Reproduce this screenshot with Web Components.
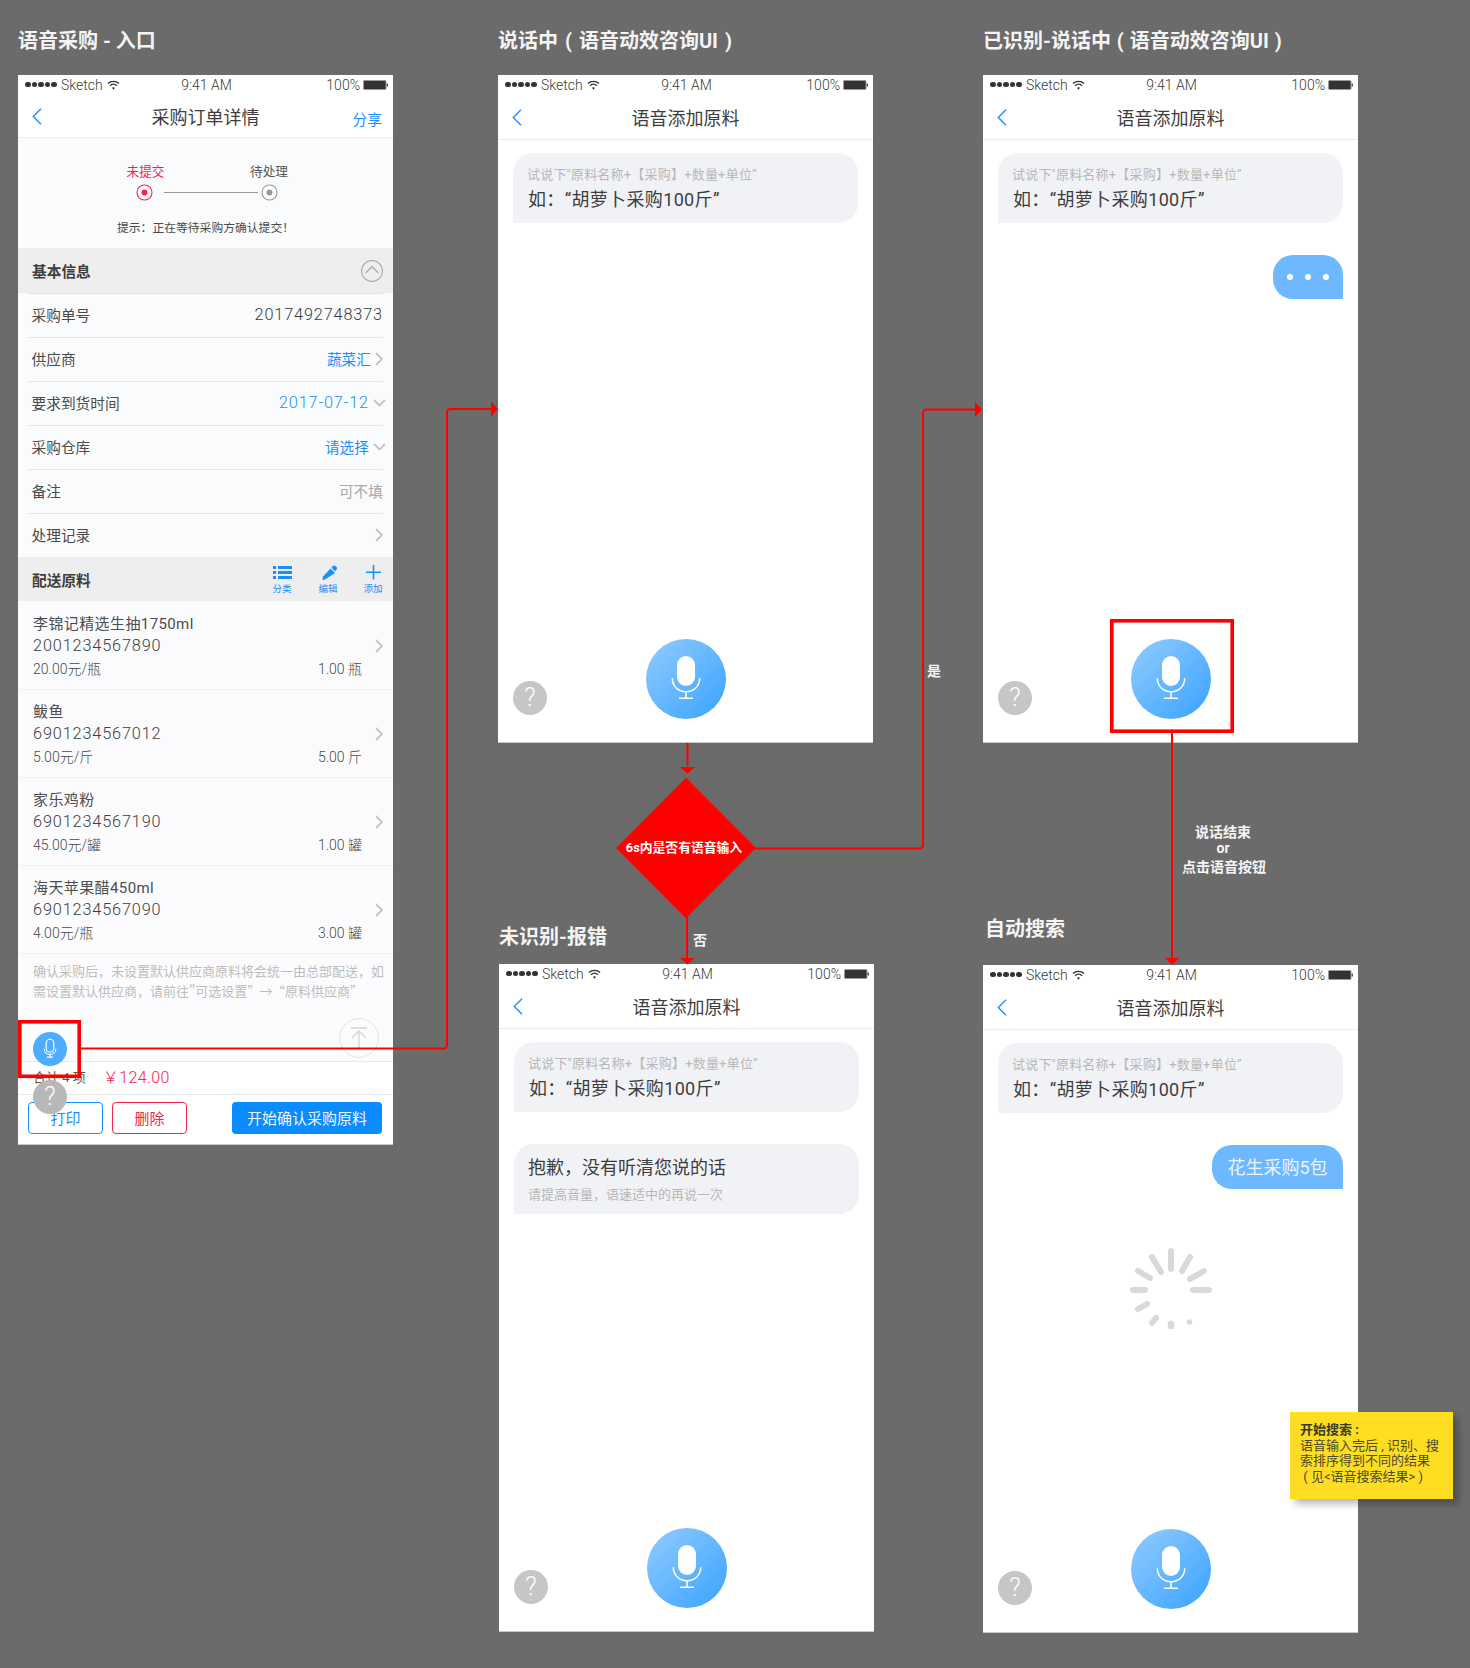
<!DOCTYPE html>
<html lang="zh-CN"><head><meta charset="utf-8"><title>语音采购</title>
<style>
html,body{margin:0;padding:0;background:#6b6b6b}
body{font-family:Roboto,"Noto Sans CJK SC",sans-serif;color:#444}
</style></head><body>
<flow-canvas>
  <canvas-title x="18" y="27" ws="0">语音采购 - 入口</canvas-title>
  <canvas-title x="498" y="27" ws="2">说话中 ( 语音动效咨询UI )</canvas-title>
  <canvas-title x="983" y="27" ws="1">已识别-说话中 ( 语音动效咨询UI )</canvas-title>
  <canvas-title x="499" y="923">未识别-报错</canvas-title>
  <canvas-title x="985" y="915">自动搜索</canvas-title>

  <phone-frame x="18" y="75" h="1069"><order-screen></order-screen></phone-frame>

  <phone-frame x="498" y="75" h="667"><voice-screen>
    <prompt-bubble></prompt-bubble>
  </voice-screen></phone-frame>

  <phone-frame x="983" y="75" h="667"><voice-screen>
    <prompt-bubble></prompt-bubble>
    <user-bubble dots></user-bubble>
  </voice-screen></phone-frame>

  <phone-frame x="499" y="964" h="667"><voice-screen>
    <prompt-bubble></prompt-bubble>
    <error-bubble></error-bubble>
  </voice-screen></phone-frame>

  <phone-frame x="983" y="965" h="667"><voice-screen>
    <prompt-bubble></prompt-bubble>
    <user-bubble>花生采购5包</user-bubble>
    <load-spinner></load-spinner>
  </voice-screen></phone-frame>

  <flow-lines></flow-lines>
  <sticky-note x="1290" y="1412"></sticky-note>
</flow-canvas>

<script>
const BLUE='#1a90ff',RED='#f5224f';
const chevL='<svg width="10" height="17" viewBox="0 0 10 17" fill="none" stroke="#1a90ff" stroke-width="1.4"><path d="M9 .8 1.3 8.5 9 16.2"/></svg>';
const chevR='<svg width="8" height="14" viewBox="0 0 8 14" fill="none" stroke="#c4c4c4" stroke-width="1.8"><path d="M1 1l6 6-6 6"/></svg>';
const chevD='<svg width="13" height="8" viewBox="0 0 13 8" fill="none" stroke="#c4c4c4" stroke-width="1.8"><path d="M1 1l5.5 5.5L12 1"/></svg>';
function micSvg(size,sw){return `<svg width="${size}" height="${size}" viewBox="0 0 80 80" fill="none" stroke="#fff" stroke-width="${sw}"><rect x="31" y="17" width="18" height="30" rx="9" fill="${size>50?'#fff':'none'}" stroke="${size>50?'none':'#fff'}"/><path d="M26.3 39.3c0 8 6 13.4 13.7 13.4s13.7-5.4 13.7-13.4M40 52.7V59M33 59.2h14"/></svg>`}

class Base extends HTMLElement{
  constructor(){super();this.attachShadow({mode:'open'});}
  connectedCallback(){this.shadowRoot.innerHTML=this.render();}
}
function def(n,fn){customElements.define(n,class extends Base{render(){return fn(this)}})}

def('flow-canvas',()=>`<style>:host{display:block;position:relative;width:1470px;height:1668px;overflow:hidden}</style><slot></slot>`);

def('canvas-title',e=>`<style>:host{position:absolute;left:${e.getAttribute('x')}px;top:${e.getAttribute('y')}px;font-size:20px;font-weight:700;line-height:28px;color:#f4f4f4;white-space:nowrap;word-spacing:${e.getAttribute('ws')||0}px}</style><slot></slot>`);

def('phone-frame',e=>`<style>:host{position:absolute;left:${e.getAttribute('x')}px;top:${e.getAttribute('y')}px;width:375px;height:${e.getAttribute('h')}px;background:#fff;display:flex;flex-direction:column;box-shadow:0 1px 0 #c8c8c8}
::slotted(*){flex:1;min-height:0}</style><status-bar></status-bar><slot></slot>`);

def('status-bar',()=>`<style>:host{display:grid;grid-template-columns:1fr auto 1fr;align-items:center;height:20px;flex:none;box-sizing:border-box;padding:0 5px 1px 7px;font-size:14px;font-weight:300;color:#3a3a3a;background:#fff}
.l,.r{display:flex;align-items:center}.r{justify-content:flex-end}
.d{display:flex;gap:1px;margin-right:4px}.d i{width:5.6px;height:5.6px;border-radius:50%;background:#333}
svg{display:block}.s{margin-right:4px}.b{margin-left:3px}</style>
<div class="l"><span class="d"><i></i><i></i><i></i><i></i><i></i></span><span class="s">Sketch</span>
<svg width="13" height="10" viewBox="0 0 13 10" fill="none" stroke="#333" stroke-width="1.4"><path d="M1 3.6c3-3 8-3 11 0M3 5.7c2-1.9 5-1.9 7 0"/><path d="M6.5 9.8 4.9 7.8c1-.8 2.2-.8 3.2 0z" fill="#333" stroke="none"/></svg></div>
<span>9:41 AM</span>
<div class="r"><span>100%</span><svg class="b" width="25" height="10" viewBox="0 0 25 10"><rect x=".5" y=".5" width="22.500" height="9" rx="1" fill="#333" stroke="#999"/><rect x="23.500" y="3.500" width="1.500" height="3" fill="#555"/></svg></div>`);

def('nav-bar',e=>`<style>:host{display:grid;grid-template-columns:1fr auto 1fr;align-items:center;flex:none;height:${e.getAttribute('h')||45}px;box-sizing:border-box;border-bottom:1px solid #ececf1;padding:${e.getAttribute('h')?3:4}px 11px 0 14px;background:#fff}
h1{margin:0 0 0 -3px;font-size:18px;font-weight:400;color:#3d3d3d;line-height:24px}
.b{display:flex}.b svg{display:block;margin-top:-3px}.a{text-align:right;color:${BLUE};font-size:14.7px;margin-top:1px}</style>
<div class="b">${chevL}</div><h1><slot></slot></h1><div class="a">${e.getAttribute('action')||''}</div>`);

def('help-button',e=>{const s=e.getAttribute('color')||'#c6c6c6';return `<style>:host{display:flex;align-items:center;justify-content:center;width:34px;height:34px;border-radius:50%;background:${s};color:#fff;font-size:25px;font-weight:300;line-height:34px}</style>?`});

def('mic-button',e=>{const z=+e.getAttribute('size')||80;return `<style>:host{display:flex;width:${z}px;height:${z}px;border-radius:50%;background:${z>50?'linear-gradient(135deg,#93cbff,#38a3ff)':'#4dadff'}}svg{display:block}</style>${micSvg(z,z>50?1.5:2.8)}`});

/* order page parts */
def('section-head',e=>`<style>:host{display:flex;align-items:center;justify-content:space-between;height:${e.getAttribute('h')||44}px;box-sizing:border-box;padding:0 10px 0 14px;background:#eeeeee;flex:none;font-size:14.7px;font-weight:700;color:#3d3d3d}</style><span>${e.getAttribute('label')}</span><slot></slot>`);

def('info-row',e=>{const t=e.getAttribute('tone');const c=t==='blue'?BLUE:t==='gray'?'#a8a8a8':'#3a3a3a';const ic=e.getAttribute('icon');const num=e.hasAttribute('num');
return `<style>:host{display:flex;align-items:center;height:44px;box-sizing:border-box;margin:0 10px;padding:0 0 2px 3.5px;border-bottom:1px solid #e8e8ea;flex:none;font-size:14.7px;color:#4a4a4a}
.l{flex:1}.v{color:${c};${num?'font-size:16.3px;font-weight:300;letter-spacing:.85px;':''}}.i{display:flex;margin-left:4px;${ic==='d'?'margin-right:-3px;':''}}svg{display:block}</style>
<span class="l">${e.getAttribute('label')}</span><span class="v">${e.getAttribute('value')||''}</span>${ic?`<span class="i">${ic==='d'?chevD:chevR}</span>`:''}`});

def('goods-item',e=>`<style>:host{display:flex;align-items:center;height:88px;box-sizing:border-box;padding:3px 10px 0 15px;border-bottom:1px solid #f2f2f4;flex:none;color:#4d4d4d}
.t{flex:1;font-size:15px;line-height:22px;letter-spacing:.4px}.n{font-size:16.3px;font-weight:300;letter-spacing:.85px;color:#404040}.m{display:flex;justify-content:space-between;font-size:14px;line-height:23px;font-weight:300;letter-spacing:0;color:#4a4a4a;padding-top:1px}
.c{margin:-2px 0 0 13px;display:flex}svg{display:block}</style>
<div class="t"><div>${e.getAttribute('name')}</div><div class="n">${e.getAttribute('code')}</div><div class="m"><span>${e.getAttribute('price')}</span><span>${e.getAttribute('qty')}</span></div></div><div class="c">${chevR}</div>`);

def('tool-btn',e=>{const k=e.getAttribute('kind');const ic={list:'<path d="M0 1h3v3H0zM5 1h14v3H5zM0 6h3v3H0zM5 6h14v3H5zM0 11h3v3H0zM5 11h14v3H5z" fill="#1a90ff"/>',pen:'<g transform="translate(1)"><path d="M5 14.500l-2.500.5.5-3.500L10.500 3.500l4.500 4.500z" fill="#1a90ff"/><path d="M11.500 2.500 13 1c.8-.7 1.800-.7 2.500 0l1 1.100c.7.8.7 1.700 0 2.400L15 6.500z" fill="#1a90ff"/></g>',plus:'<path d="M9.500 0v14.500M2 7.300h15" stroke="#1a90ff" stroke-width="1.600" fill="none"/>'}[k];
return `<style>:host{display:flex;flex-direction:column;align-items:center;width:20px;font-size:9.500px;font-weight:400;color:${BLUE};line-height:12px}svg{display:block;margin-bottom:3px}</style><svg width="19" height="15" viewBox="0 0 19 15">${ic}</svg><span>${e.getAttribute('label')}</span>`});

def('tool-row',()=>`<style>:host{display:flex;margin-top:2px}::slotted(:nth-child(1)){margin-right:-1px}::slotted(:nth-child(2)){margin-left:27px}::slotted(:nth-child(3)){margin-left:25px}</style><slot></slot>`);

def('status-step',e=>{const on=e.hasAttribute('active');const c=on?RED:'#999';return `<style>:host{display:flex;flex-direction:column;align-items:center;width:44px;flex:none;font-size:12.700px;color:${on?RED:'#555'};line-height:18px}
span{${on?'margin-left:3px;':''}}svg{display:block;margin-top:3px}</style><span>${e.getAttribute('label')}</span><svg width="17" height="17" viewBox="0 0 17 17"><circle cx="8.500" cy="8.500" r="7.500" fill="#fff" stroke="${c}" stroke-width="1.100"/><circle cx="8.500" cy="8.500" r="3" fill="${c}"/></svg>`});

def('order-steps',()=>`<style>:host{display:block;height:110px;box-sizing:border-box;padding-top:25px;flex:none}
.s{display:flex;justify-content:center;align-items:flex-end;margin-left:2px}
.li{width:94px;height:1px;flex:none;background:#9a9a9a;margin:0 -11px 8px -2px}
p{margin:19px 0 0;text-align:center;font-size:11.800px;line-height:16px;color:#4a4a4a}</style>
<div class="s"><status-step active label="未提交"></status-step><span class="li"></span><status-step label="待处理"></status-step></div>
<p>提示：正在等待采购方确认提交！</p>`);

def('order-screen',()=>`<style>:host{display:flex;flex-direction:column;position:relative;background:linear-gradient(180deg,#fafbfd 0,#fbfbfd 60%,#fdfbfd 100%)}
.note{height:107px;box-sizing:border-box;padding:7px 0 0 15px;font-family:"Noto Sans CJK SC",sans-serif;font-size:13px;line-height:19.500px;word-spacing:-3.500px;color:#bdbdbd;flex:none;white-space:nowrap}
.top{position:absolute;left:321px;top:923px;width:40px;height:40px;box-sizing:border-box;border:1px solid #e4e4e6;border-radius:50%;display:flex;align-items:center;justify-content:center}
.total{height:34px;flex:none;box-sizing:border-box;border-top:1px solid #e8e8ea;border-bottom:1px solid #e8e8ea;background:#fff;display:flex;align-items:center;padding:0 0 4px 15px;font-size:13px;color:#555}
.total b{font-weight:300;color:${RED};font-size:16px;margin-left:17px;letter-spacing:.4px}
.foot{height:49px;flex:none;box-sizing:border-box;background:#fff;padding:7px 11px 10px 10px;display:flex;gap:9px}
button{font:inherit;font-size:15px;box-sizing:border-box;height:32px;border-radius:4px;background:#fff;padding:0 0 2px}
.o{width:75px;border:1px solid ${BLUE};color:${BLUE}}.r{width:75px;border:1px solid ${RED};color:${RED}}
.m{width:150px;margin-left:36px;border:0;background:#0a8cff;color:#f2f8ff}
mic-button{position:absolute;left:15px;top:937px}
help-button{position:absolute;left:15px;top:985px}
</style>
<nav-bar h="43" action="分享">采购订单详情</nav-bar>
<order-steps></order-steps>
<section-head h="45" label="基本信息"><svg width="22" height="22" viewBox="0 0 22 22" fill="none" stroke="#a8a8a8" stroke-width="1.100"><circle cx="11" cy="11" r="10.500"/><path d="M4.500 13 11 6.700 17.500 13" stroke-width="1.600" stroke="#b4b4b4"/></svg></section-head>
<info-row label="采购单号" value="2017492748373" num style="height:45px;border-top:1px solid #e4e4e6"></info-row>
<info-row label="供应商" value="蔬菜汇" tone="blue" icon="r"></info-row>
<info-row label="要求到货时间" value="2017-07-12" num tone="blue" icon="d"></info-row>
<info-row label="采购仓库" value="请选择" tone="blue" icon="d"></info-row>
<info-row label="备注" value="可不填" tone="gray"></info-row>
<info-row label="处理记录" icon="r" style="height:43px;border-bottom:0"></info-row>
<section-head label="配送原料"><tool-row><tool-btn kind="list" label="分类"></tool-btn><tool-btn kind="pen" label="编辑"></tool-btn><tool-btn kind="plus" label="添加"></tool-btn></tool-row></section-head>
<goods-item name="李锦记精选生抽1750ml" code="2001234567890" price="20.00元/瓶" qty="1.00 瓶" style="height:89px"></goods-item>
<goods-item name="鲅鱼" code="6901234567012" price="5.00元/斤" qty="5.00 斤"></goods-item>
<goods-item name="家乐鸡粉" code="6901234567190" price="45.00元/罐" qty="1.00 罐"></goods-item>
<goods-item name="海天苹果醋450ml" code="6901234567090" price="4.00元/瓶" qty="3.00 罐"></goods-item>
<div class="note">确认采购后，未设置默认供应商原料将会统一由总部配送，如<br>需设置默认供应商，请前往"可选设置” → “原料供应商”</div>
<div class="total"><span>合计 4 项</span><b>￥124.00</b></div>
<div class="foot"><button class="o">打印</button><button class="r">删除</button><button class="m">开始确认采购原料</button></div>
<div class="top"><svg width="18" height="22" viewBox="0 0 18 22" fill="none" stroke="#d4d4d4" stroke-width="1.300"><path d="M1 1h16M9 22V4M2 11l7-7 7 7"/></svg></div>
<mic-button size="34"></mic-button>
<help-button color="#b8b8b8"></help-button>`);

/* voice page parts */
def('prompt-bubble',()=>`<style>:host{display:block;height:70px;box-sizing:border-box;padding:11px 14px 0;border-radius:20px 20px 20px 0;background:#f1f2f6}
.s{font-size:13px;line-height:22px;letter-spacing:.2px;color:#b8b8b8;white-space:nowrap}.m{font-size:18px;line-height:26px;margin:1px 0 0 1px;letter-spacing:.35px;color:#3d3d3d;white-space:nowrap}</style>
<div class="s">试说下"原料名称+【采购】+数量+单位”</div><div class="m">如：“胡萝卜采购100斤”</div>`);

def('error-bubble',()=>`<style>:host{display:block;height:70px;box-sizing:border-box;padding:11px 14px 0;border-radius:20px 20px 20px 0;background:#f1f2f6}
.m{font-size:18px;line-height:26px;color:#3d3d3d}.s{font-size:13px;line-height:22px;margin-top:3px;color:#b8b8b8}</style>
<div class="m">抱歉，没有听清您说的话</div><div class="s">请提高音量，语速适中的再说一次</div>`);

def('user-bubble',e=>{const d=e.hasAttribute('dots');return `<style>:host{display:flex;align-self:flex-end;align-items:center;justify-content:center;box-sizing:border-box;height:44px;${d?'width:70px;gap:12px;':'width:131px;padding-bottom:2px;'}border-radius:20px 20px 0 20px;background:#6db8ff;color:#eaf5ff;font-size:18px}
i{width:6px;height:6px;border-radius:50%;background:#fff}</style>${d?'<i></i><i></i><i></i>':'<slot></slot>'}`});

def('load-spinner',()=>{const L=[[0,-39,0,-21,6],[19,-33,11,-19,6],[33,-19,19,-11,6],[38,0,22,0,6],[18.5,32,18.500,32,5.500],[0,34,0,36,6.500],[-15,28,-19,33,6],[-24,14,-33,19,6],[-26,0,-38,0,6],[-21,-12,-33,-19,6],[-10,-18,-19,-33,6]];
return `<style>:host{display:block;align-self:center;margin-top:26px;width:86px;height:86px}svg{display:block}</style><svg width="86" height="86" viewBox="-43 -43 86 86" stroke="#d9d9d9" stroke-linecap="round">${L.map(l=>`<line x1="${l[0]}" y1="${l[1]}" x2="${l[2]}" y2="${l[3]}" stroke-width="${l[4]}"/>`).join('')}</svg>`});

def('voice-screen',()=>`<style>:host{display:flex;flex-direction:column}
.b{flex:1;display:flex;flex-direction:column;gap:32px;padding:13px 15px 0;min-height:0}
.f{display:grid;grid-template-columns:1fr 80px 1fr;align-items:end;padding:0 14px 0 15px;height:80px;margin-bottom:23px;flex:none}
help-button{margin:0 0 4px}</style>
<nav-bar>语音添加原料</nav-bar><div class="b"><slot></slot></div>
<div class="f"><help-button></help-button><mic-button></mic-button><span></span></div>`);

def('sticky-note',e=>`<style>:host{position:absolute;left:${e.getAttribute('x')}px;top:${e.getAttribute('y')}px;box-sizing:border-box;width:163px;height:87px;padding:10px 0 0 10px;background:#ffdd22;box-shadow:5px 5px 7px rgba(0,0,0,.28);font-size:13px;line-height:15.500px;color:#4a4a2a;white-space:nowrap}
b{color:#3a3a2a}</style><b>开始搜索 :</b><br>语音输入完后 , 识别、搜<br>索排序得到不同的结果<br>&nbsp;( 见&lt;语音搜索结果&gt; )`);

def('flow-lines',()=>`<style>:host{position:absolute;left:0;top:0;width:1470px;height:1668px;pointer-events:none}
svg{position:absolute;left:0;top:0}
span{position:absolute;color:#f5f5f5;font-size:14px;font-weight:700;line-height:16px;text-align:center;white-space:nowrap;transform:translate(-50%,-50%)}
.di{font-size:12.800px;color:#fff}</style>
<svg width="1470" height="1668" fill="none" stroke="#ff0000" stroke-width="2">
<rect x="19.800" y="1021.800" width="59.400" height="54.500" stroke-width="3.600"/>
<path d="M80 1048.500H443.500a3.500 3.500 0 0 0 3.500-3.500V412.500a3.500 3.500 0 0 1 3.500-3.500H492"/>
<path d="M491 401.500 498 409l-7 7.500z" fill="#f00" stroke="none"/>
<path d="M687.500 743v23"/><path d="M680 767h15l-7.500 6.800z" fill="#f00" stroke="none"/>
<path d="M686 777.700 756 848l-70 70.300L616 848z" fill="#f00" stroke="none"/>
<path d="M750 848.500H919.500a3.500 3.500 0 0 0 3.500-3.500V413a3.500 3.500 0 0 1 3.500-3.500H976"/>
<path d="M975 402 982 409.500l-7 7.500z" fill="#f00" stroke="none"/>
<path d="M687 915v43"/><path d="M680 958h14.500l-7.200 6.500z" fill="#f00" stroke="none"/>
<rect x="1111.800" y="620.800" width="120.400" height="110.400" stroke-width="3.600"/>
<path d="M1172 733v226"/><path d="M1165 958h14.500l-7.200 6.500z" fill="#f00" stroke="none"/>
</svg>
<span class="di" style="left:684px;top:848px">6s内是否有语音输入</span>
<span style="left:934px;top:671px">是</span>
<span style="left:700px;top:940px">否</span>
<span style="left:1223px;top:832px">说话结束</span>
<span style="left:1223px;top:848px">or</span>
<span style="left:1224px;top:867px">点击语音按钮</span>`);
</script>
</body></html>
